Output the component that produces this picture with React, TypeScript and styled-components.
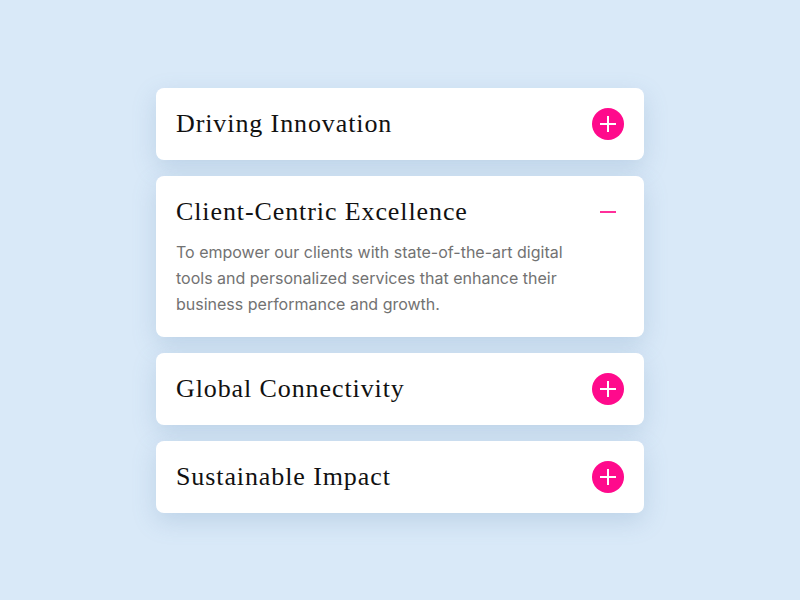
import React, { useState } from 'react';
import styled, { createGlobalStyle } from 'styled-components';

const GlobalStyle = createGlobalStyle`
    * {
        box-sizing: border-box;
    }
    html,
    body {
        margin: 0;
        padding: 0;
        background-color: #d9e9f8;
    }
`;

const Page = styled.div`
    width: 800px;
    height: 600px;
    display: flex;
    justify-content: center;
    padding-top: 88px;
`;

const List = styled.ul`
    width: 488px;
    margin: 0;
    padding: 0;
    list-style: none;
    display: flex;
    flex-direction: column;
    gap: 16px;
`;

const Item = styled.li`
    background-color: #fff;
    border-radius: 8px;
    padding: 20px;
    box-shadow: 0 8px 24px rgba(90, 130, 175, 0.22);
`;

const Header = styled.button`
    width: 100%;
    display: flex;
    justify-content: space-between;
    align-items: center;
    padding: 0;
    border: none;
    background: none;
    cursor: pointer;
    text-align: left;
`;

const Title = styled.h3`
    margin: 0;
    font-family: 'Liberation Serif', 'Times New Roman', serif;
    font-weight: 400;
    font-size: 26px;
    letter-spacing: 0.9px;
    line-height: 32px;
    color: #111;
`;

type toggleProps = {
    $open: boolean;
};

const Toggle = styled.span<toggleProps>`
    width: 32px;
    height: 32px;
    border-radius: 50%;
    flex-shrink: 0;
    display: flex;
    justify-content: center;
    align-items: center;
    background-color: ${(props) => (props.$open ? 'transparent' : '#ff0a8c')};
    color: ${(props) => (props.$open ? '#ff2f9a' : '#fff')};
`;

const Body = styled.p`
    margin: 11px 0 0;
    max-width: 400px;
    font-family: Inter, 'Liberation Sans', sans-serif;
    font-size: 16px;
    line-height: 26px;
    color: #727272;
`;

const items = [
    {
        title: 'Driving Innovation',
        text: 'To lead the industry with bold ideas and forward-thinking solutions that shape the future of business.',
    },
    {
        title: 'Client-Centric Excellence',
        text: 'To empower our clients with state-of-the-art digital tools and personalized services that enhance their business performance and growth.',
    },
    {
        title: 'Global Connectivity',
        text: 'To connect people and businesses across borders through seamless digital experiences.',
    },
    {
        title: 'Sustainable Impact',
        text: 'To build responsibly, creating lasting value for communities and the planet.',
    },
];

const App = () => {
    const [open, setOpen] = useState(1);

    return (
        <>
            <GlobalStyle />
            <Page>
                <List>
                    {items.map((item, i) => {
                        const isOpen = open === i;
                        return (
                            <Item key={item.title}>
                                <Header onClick={() => setOpen(isOpen ? -1 : i)}>
                                    <Title>{item.title}</Title>
                                    <Toggle $open={isOpen}>
                                        <svg width="18" height="18" viewBox="0 0 18 18">
                                            <path
                                                d={isOpen ? 'M1 9h16' : 'M9 1v16M1 9h16'}
                                                stroke="currentColor"
                                                strokeWidth="2"
                                                fill="none"
                                            />
                                        </svg>
                                    </Toggle>
                                </Header>
                                {isOpen && <Body>{item.text}</Body>}
                            </Item>
                        );
                    })}
                </List>
            </Page>
        </>
    );
};

export default App;
